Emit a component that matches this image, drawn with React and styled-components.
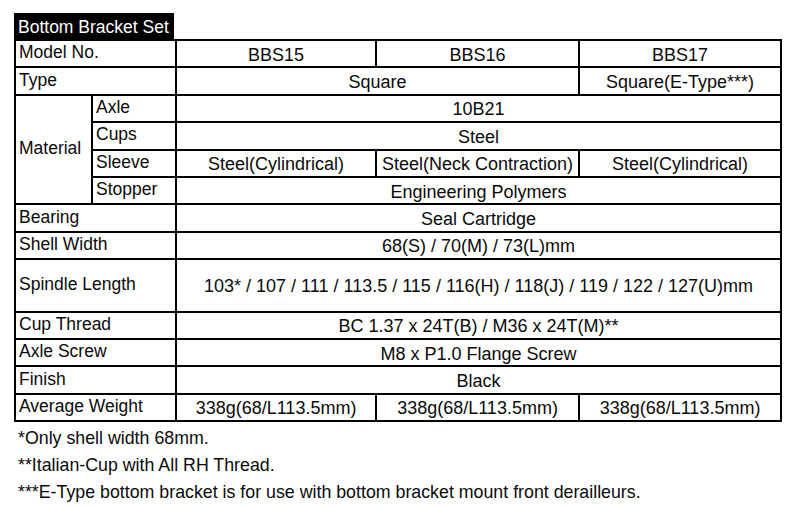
import styled, { createGlobalStyle } from "styled-components"

const GlobalStyle = createGlobalStyle`
  html, body {
    margin: 0;
    padding: 0;
    background: #fff;
  }
  body {
    font-family: "Liberation Sans", Arial, sans-serif;
    color: #0a0a0a;
  }
`

const Page = styled.div`
  width: 800px;
  height: 507px;
  padding: 13px 0 0 14px;
  box-sizing: border-box;
  overflow: hidden;
`

const Title = styled.div`
  width: 160px;
  height: 26px;
  box-sizing: border-box;
  padding-left: 4px;
  background: #000;
  color: #fff;
  font-size: 17.5px;
  line-height: 28px;
  white-space: nowrap;
`

const SpecTable = styled.table`
  border-collapse: collapse;
  table-layout: fixed;
  width: 766px;
  font-size: 18px;

  th,
  td {
    border: 2px solid #000;
    padding: 0;
    white-space: nowrap;
    overflow: hidden;
  }
`

const Row = styled.tr`
  height: ${(p) => (p.$tall ? "52.5px" : "27.4px")};
`

const Label = styled.th`
  text-align: left;
  font-weight: normal;
  font-size: 17.5px;
  padding: 0 0 2px 3px !important;
  vertical-align: middle;
`

const Value = styled.td`
  text-align: center;
  vertical-align: middle;
  padding-top: 3px !important;
`

const Notes = styled.div`
  display: flex;
  flex-direction: column;
  padding: 3px 0 0 4px;
  font-size: 17.8px;

  p {
    margin: 0;
    line-height: 27px;
  }
`

const rows = [
  { label: "Bearing", value: "Seal Cartridge" },
  { label: "Shell Width", value: "68(S) / 70(M) / 73(L)mm" },
  {
    label: "Spindle Length",
    value: "103* / 107 / 111 / 113.5 / 115 / 116(H) / 118(J) / 119 / 122 / 127(U)mm",
    tall: true,
  },
  { label: "Cup Thread", value: "BC 1.37 x 24T(B) / M36 x 24T(M)**" },
  { label: "Axle Screw", value: "M8 x P1.0 Flange Screw" },
  { label: "Finish", value: "Black" },
]

const weight = "338g(68/L113.5mm)"

export default function App() {
  return (
    <Page>
      <GlobalStyle />
      <Title>Bottom Bracket Set</Title>
      <SpecTable>
        <colgroup>
          <col style={{ width: 77 }} />
          <col style={{ width: 84 }} />
          <col style={{ width: 200 }} />
          <col style={{ width: 203 }} />
          <col style={{ width: 202 }} />
        </colgroup>
        <tbody>
          <Row>
            <Label colSpan={2}>Model No.</Label>
            <Value>BBS15</Value>
            <Value>BBS16</Value>
            <Value>BBS17</Value>
          </Row>
          <Row>
            <Label colSpan={2}>Type</Label>
            <Value colSpan={2}>Square</Value>
            <Value>Square(E-Type***)</Value>
          </Row>
          <Row>
            <Label rowSpan={4}>Material</Label>
            <Label>Axle</Label>
            <Value colSpan={3}>10B21</Value>
          </Row>
          <Row>
            <Label>Cups</Label>
            <Value colSpan={3}>Steel</Value>
          </Row>
          <Row>
            <Label>Sleeve</Label>
            <Value>Steel(Cylindrical)</Value>
            <Value>Steel(Neck Contraction)</Value>
            <Value>Steel(Cylindrical)</Value>
          </Row>
          <Row>
            <Label>Stopper</Label>
            <Value colSpan={3}>Engineering Polymers</Value>
          </Row>
          {rows.map((r) => (
            <Row key={r.label} $tall={r.tall}>
              <Label colSpan={2}>{r.label}</Label>
              <Value colSpan={3}>{r.value}</Value>
            </Row>
          ))}
          <Row>
            <Label colSpan={2}>Average Weight</Label>
            <Value>{weight}</Value>
            <Value>{weight}</Value>
            <Value>{weight}</Value>
          </Row>
        </tbody>
      </SpecTable>
      <Notes>
        <p>*Only shell width 68mm.</p>
        <p>**Italian-Cup with All RH Thread.</p>
        <p>***E-Type bottom bracket is for use with bottom bracket mount front derailleurs.</p>
      </Notes>
    </Page>
  )
}
